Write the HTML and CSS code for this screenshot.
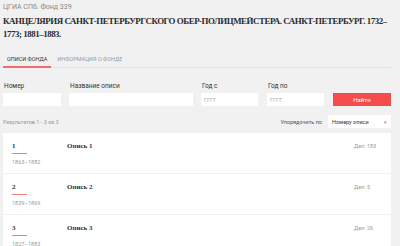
FILE: index.html
```html
<!DOCTYPE html>
<html>
    <head>
        <meta charset="utf-8">
        <title>Опись фонда</title>
        <link rel="stylesheet" href="styles.css">
    </head>
    <body>
        <div class="page">
            <div class="fund-code">ЦГИА СПб. Фонд 339</div>
            <h1 class="fund-title">КАНЦЕЛЯРИЯ САНКТ-ПЕТЕРБУРГСКОГО ОБЕР-ПОЛИЦМЕЙСТЕРА. САНКТ-ПЕТЕРБУРГ. 1732–1773; 1881–1883.</h1>

            <!-- вкладки -->
            <div class="tabs">
                <a href="javascript:void(0);" class="tab active">Описи фонда</a>
                <a href="javascript:void(0);" class="tab">Информация о фонде</a>
            </div>

            <!-- фильтр -->
            <form class="filter">
                <div class="field f-num">
                    <label>Номер</label>
                    <input type="text">
                </div>
                <div class="field f-name">
                    <label>Название описи</label>
                    <input type="text">
                </div>
                <div class="field f-year">
                    <label>Год с</label>
                    <input type="text" placeholder="ГГГГ">
                </div>
                <div class="field f-year">
                    <label>Год по</label>
                    <input type="text" placeholder="ГГГГ">
                </div>
                <button type="button" class="btn-find">Найти</button>
            </form>

            <div class="results-bar">
                <span class="results-count">Результатов 1 - 3 из 3</span>
                <div class="sort">
                    <span>Упорядочить по</span>
                    <div class="sort-select">Номеру описи<span class="arrow">▾</span></div>
                </div>
            </div>

            <!-- список описей -->
            <div class="list">
                <div class="item">
                    <div class="item-num">
                        <div class="num">1</div>
                        <div class="dates">1863–1882</div>
                    </div>
                    <div class="item-name">Опись 1</div>
                    <div class="item-count">Дел: 183</div>
                </div>
                <div class="item">
                    <div class="item-num">
                        <div class="num">2</div>
                        <div class="dates">1839–1869</div>
                    </div>
                    <div class="item-name">Опись 2</div>
                    <div class="item-count">Дел: 5</div>
                </div>
                <div class="item">
                    <div class="item-num">
                        <div class="num">3</div>
                        <div class="dates">1827–1883</div>
                    </div>
                    <div class="item-name">Опись 3</div>
                    <div class="item-count">Дел: 26</div>
                </div>
            </div>
        </div>
    </body>
</html>
```

FILE: styles.css
```css
*{
    margin: 0;
    padding: 0;
    box-sizing: border-box;
}
body{
    background-color: #f1f1f1;
    font-family: Roboto, "Liberation Sans", sans-serif;
    color: #333;
    overflow: hidden;
}
a{
    text-decoration: none;
}
.page{
    width: 388px;
    margin-left: 3px;
    padding-top: 3px;
}
.fund-code{
    font-size: 7px;
    line-height: 9px;
    color: #888;
}
.fund-title{
    margin-top: 3px;
    font-family: "Liberation Serif", serif;
    font-size: 8.9px;
    line-height: 13px;
    font-weight: bold;
    letter-spacing: -0.45px;
    color: #2b2b2b;
}
.tabs{
    display: flex;
    margin-top: 15px;
    border-bottom: 1px solid #e2e2e2;
}
.tab{
    display: block;
    padding: 0 4px 4px;
    margin-right: 2px;
    font-size: 5.5px;
    text-transform: uppercase;
    color: #999;
    border-bottom: 2px solid transparent;
    margin-bottom: -1px;
}
.tab.active{
    color: #333;
    border-bottom-color: #f36b6b;
}
.filter{
    display: flex;
    align-items: flex-end;
    margin-top: 14px;
}
.field label{
    display: block;
    font-size: 6.5px;
    line-height: 8px;
    margin-bottom: 3px;
    margin-left: 1px;
}
.field input{
    display: block;
    width: 100%;
    height: 13px;
    border: none;
    background-color: #fff;
    padding-left: 3px;
    font-size: 5.5px;
    font-family: Roboto, sans-serif;
}
.field input::placeholder{
    color: #aaa;
}
.f-num{
    width: 58px;
    margin-right: 8px;
}
.f-name{
    width: 124px;
    margin-right: 8px;
}
.f-year{
    width: 57px;
    margin-right: 9px;
}
.btn-find{
    width: 58px;
    height: 13px;
    border: none;
    background-color: #f44c4c;
    color: #fff;
    font-size: 6px;
    font-family: Roboto, sans-serif;
}
.results-bar{
    display: flex;
    justify-content: space-between;
    align-items: center;
    margin-top: 9px;
    font-size: 5.5px;
}
.results-count{
    color: #999;
}
.sort{
    display: flex;
    align-items: center;
}
.sort span{
    color: #555;
}
.sort-select{
    width: 63px;
    height: 13px;
    margin-left: 6px;
    background-color: #fff;
    padding: 0 4px;
    display: flex;
    align-items: center;
    justify-content: space-between;
    color: #333;
}
.sort-select .arrow{
    color: #f36b6b;
    font-size: 5px;
}
.list{
    margin-top: 5px;
}
.item{
    display: flex;
    align-items: flex-start;
    height: 40px;
    background-color: #fff;
    margin-bottom: 1px;
    padding: 9px 9px 0;
}
.item-num{
    width: 55px;
}
.num{
    width: 15px;
    font-family: "Liberation Serif", serif;
    font-weight: bold;
    font-size: 7px;
    line-height: 8px;
    padding-bottom: 3px;
    border-bottom: 1px solid #f37b7b;
}
.dates{
    margin-top: 5px;
    font-size: 5.5px;
    line-height: 7px;
    color: #999;
}
.item-name{
    flex: 1;
    font-family: "Liberation Serif", serif;
    font-weight: bold;
    font-size: 7px;
    line-height: 8px;
}
.item-count{
    width: 28px;
    font-size: 5.5px;
    line-height: 8px;
    color: #999;
}
```
